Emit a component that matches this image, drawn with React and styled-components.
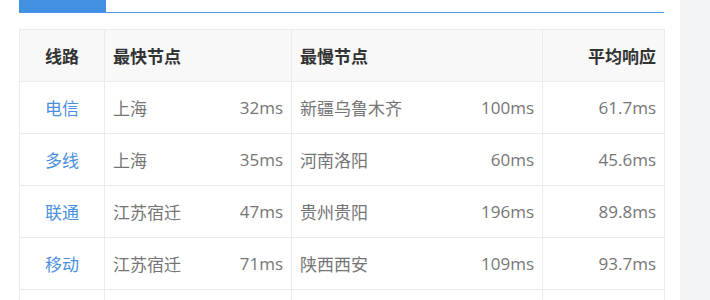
import React from "react";
import styled, { createGlobalStyle } from "styled-components";

const GlobalStyle = createGlobalStyle`
  html, body {
    margin: 0;
    padding: 0;
    background: #f2f4f7;
  }
  body {
    font-family: "Open Sans", "Noto Sans CJK SC", sans-serif;
  }
`;

const Page = styled.div`
  display: flex;
  height: 300px;
  overflow: hidden;
`;

const Panel = styled.div`
  width: 680px;
  background: #fff;
  padding: 0 16px 0 19px;
  box-sizing: border-box;
`;

const TabBar = styled.div`
  display: flex;
  height: 12px;
  border-bottom: 1px solid #4a93e6;
`;

const Tab = styled.div`
  width: 87px;
  background: ${(p) => (p.active ? "#4190e2" : "transparent")};
`;

const Table = styled.table`
  margin-top: 16px;
  width: 645px;
  border-collapse: collapse;
  table-layout: fixed;
  font-size: 17px;
`;

const Head = styled.th`
  height: 51px;
  padding: 0 8px;
  background: #f8f8f8;
  border: 1px solid #ebebeb;
  color: #333;
  font-weight: 700;
  text-align: ${(p) => p.align || "left"};
`;

const Cell = styled.td`
  height: 51px;
  padding: 0 8px;
  border: 1px solid #ebebeb;
  color: ${(p) => (p.line ? "#4a90e2" : "#757575")};
  text-align: ${(p) => p.align || "left"};
`;

const Split = styled.div`
  display: flex;
  justify-content: space-between;
  align-items: center;
`;

const rows = [
  ["电信", "上海", "32ms", "新疆乌鲁木齐", "100ms", "61.7ms"],
  ["多线", "上海", "35ms", "河南洛阳", "60ms", "45.6ms"],
  ["联通", "江苏宿迁", "47ms", "贵州贵阳", "196ms", "89.8ms"],
  ["移动", "江苏宿迁", "71ms", "陕西西安", "109ms", "93.7ms"],
  ["", "", "", "", "", ""],
];

export default function App() {
  return (
    <>
      <GlobalStyle />
      <Page>
        <Panel>
          <TabBar>
            <Tab active />
          </TabBar>
          <Table>
            <colgroup>
              <col style={{ width: 85 }} />
              <col style={{ width: 187 }} />
              <col style={{ width: 251 }} />
              <col style={{ width: 122 }} />
            </colgroup>
            <thead>
              <tr>
                <Head align="center">线路</Head>
                <Head>最快节点</Head>
                <Head>最慢节点</Head>
                <Head align="right">平均响应</Head>
              </tr>
            </thead>
            <tbody>
              {rows.map((r, i) => (
                <tr key={i}>
                  <Cell line align="center">{r[0]}</Cell>
                  <Cell>
                    <Split>
                      <span>{r[1]}</span>
                      <span>{r[2]}</span>
                    </Split>
                  </Cell>
                  <Cell>
                    <Split>
                      <span>{r[3]}</span>
                      <span>{r[4]}</span>
                    </Split>
                  </Cell>
                  <Cell align="right">{r[5]}</Cell>
                </tr>
              ))}
            </tbody>
          </Table>
        </Panel>
      </Page>
    </>
  );
}
